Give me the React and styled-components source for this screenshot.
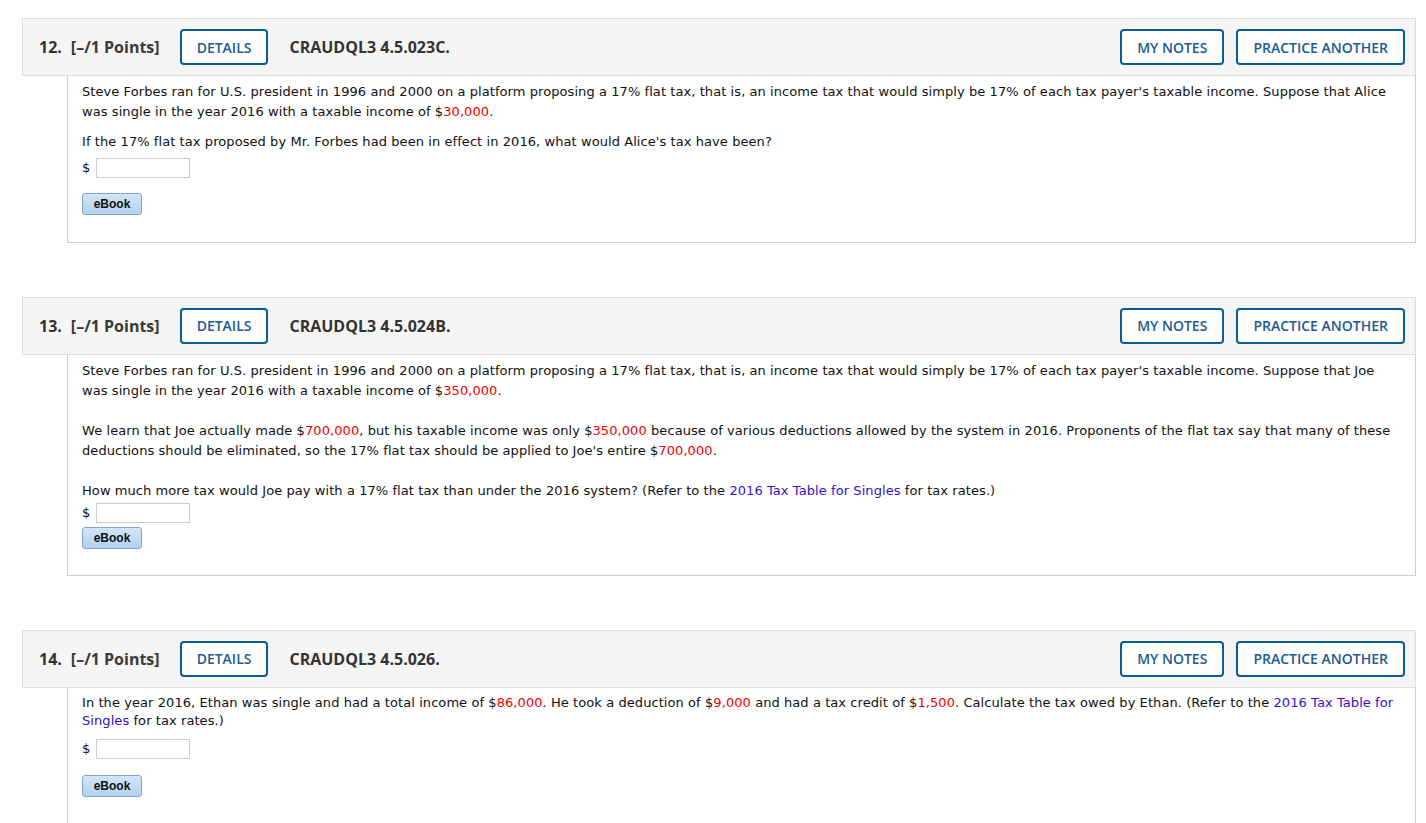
import React from 'react';
import styled, { createGlobalStyle } from 'styled-components';

const GlobalStyle = createGlobalStyle`
    html, body {
        margin: 0;
        padding: 0;
        background: #ffffff;
        overflow: hidden;
    }
`;

const Page = styled.div`
    padding: 18px 10px 0 22px;
`;

const Section = styled.div`
    margin-bottom: ${(p) => p.$gap || 54}px;
`;

const Header = styled.div`
    display: flex;
    align-items: center;
    height: 56px;
    padding: 0 10px 0 16px;
    background: #f5f5f5;
    border: 1px solid #dddddd;
    font-family: "Open Sans", "Liberation Sans", sans-serif;
    color: #333333;
`;

const Number = styled.span`
    font-size: 16px;
    font-weight: 700;
    margin-right: 9px;
`;

const Points = styled.span`
    font-size: 16px;
    font-weight: 700;
    color: #3a3a3a;
    margin-right: 20px;
`;

const Code = styled.span`
    font-size: 16px;
    font-weight: 700;
    color: #333333;
    margin-left: 21px;
`;

const Spacer = styled.div`
    flex: 1;
`;

const OutlineButton = styled.button`
    height: 36px;
    box-sizing: border-box;
    padding: 0 ${(p) => p.$pad || 15}px;
    margin-left: ${(p) => p.$ml || 0}px;
    border: 2px solid #0b5d96;
    border-radius: 4px;
    background: #ffffff;
    color: #1c5b8f;
    font-family: "Open Sans", "Liberation Sans", sans-serif;
    font-size: 14px;
    font-weight: 600;
    text-transform: uppercase;
    cursor: pointer;
`;

const Body = styled.div`
    margin-left: 45px;
    border-left: 1px solid #cccccc;
    border-right: 1px solid #cccccc;
    border-bottom: 1px solid #cccccc;
    padding: ${(p) => p.$top || 5}px 14px ${(p) => p.$bottom || 27}px;
    font-family: "DejaVu Sans", Verdana, sans-serif;
    font-size: 13px;
    letter-spacing: 0.075px;
    line-height: ${(p) => p.$lh || 20}px;
    color: #111111;
`;

const Para = styled.p`
    margin: ${(p) => p.$mt || 0}px 0 0;
`;

const Red = styled.span`
    color: #ee0000;
`;

const Link = styled.a`
    color: #3311cc;
    text-decoration: none;
`;

const AnswerRow = styled.div`
    display: flex;
    align-items: center;
    gap: 6px;
    margin-top: ${(p) => p.$mt || 0}px;
    height: 20px;
    font-size: 13px;
`;

const Dollar = styled.span`
    font-weight: 400;
`;

const AnswerInput = styled.input`
    width: 94px;
    height: 20px;
    box-sizing: border-box;
    border: 1px solid #cccccc;
    padding: 0 3px;
    margin: 0;
`;

const EBook = styled.button`
    display: block;
    margin-top: ${(p) => p.$mt || 16}px;
    width: 60px;
    height: 22px;
    padding: 0;
    border: 1px solid #7fa5d2;
    border-radius: 3px;
    background: linear-gradient(#d3e5f8, #b3d1f1);
    color: #111111;
    font-family: "Liberation Sans", Arial, sans-serif;
    font-size: 12px;
    font-weight: 700;
    letter-spacing: 0;
    cursor: pointer;
`;

const QuestionHeader = ({ num, code }) => (
    <Header>
        <Number>{num}.</Number>
        <Points>[–/1 Points]</Points>
        <OutlineButton $pad={15}>Details</OutlineButton>
        <Code>{code}</Code>
        <Spacer />
        <OutlineButton $pad={15}>My Notes</OutlineButton>
        <OutlineButton $pad={15} $ml={12}>Practice Another</OutlineButton>
    </Header>
);

const App = () => {
    return (
        <Page>
            <GlobalStyle />
            <Section $gap={54}>
                <QuestionHeader num={12} code="CRAUDQL3 4.5.023C." />
                <Body $lh={19.5} $top={6}>
                    <Para>
                        Steve Forbes ran for U.S. president in 1996 and 2000 on a platform proposing a 17% flat tax, that is, an income tax that would simply be 17% of each tax payer's taxable income. Suppose that Alice was single in the year 2016 with a taxable income of $<Red>30,000</Red>.
                    </Para>
                    <Para $mt={11}>If the 17% flat tax proposed by Mr. Forbes had been in effect in 2016, what would Alice's tax have been?</Para>
                    <AnswerRow $mt={6}>
                        <Dollar>$</Dollar>
                        <AnswerInput type="text" />
                    </AnswerRow>
                    <EBook $mt={15}>eBook</EBook>
                </Body>
            </Section>
            <Section $gap={54}>
                <QuestionHeader num={13} code="CRAUDQL3 4.5.024B." />
                <Body $top={6} $bottom={26}>
                    <Para>
                        Steve Forbes ran for U.S. president in 1996 and 2000 on a platform proposing a 17% flat tax, that is, an income tax that would simply be 17% of each tax payer's taxable income. Suppose that Joe was single in the year 2016 with a taxable income of $<Red>350,000</Red>.
                    </Para>
                    <Para $mt={20}>
                        We learn that Joe actually made $<Red>700,000</Red>, but his taxable income was only $<Red>350,000</Red> because of various deductions allowed by the system in 2016. Proponents of the flat tax say that many of these deductions should be eliminated, so the 17% flat tax should be applied to Joe's entire $<Red>700,000</Red>.
                    </Para>
                    <Para $mt={20}>
                        How much more tax would Joe pay with a 17% flat tax than under the 2016 system? (Refer to the <Link href="#">2016 Tax Table for Singles</Link> for tax rates.)
                    </Para>
                    <AnswerRow $mt={2}>
                        <Dollar>$</Dollar>
                        <AnswerInput type="text" />
                    </AnswerRow>
                    <EBook $mt={4}>eBook</EBook>
                </Body>
            </Section>
            <Section>
                <QuestionHeader num={14} code="CRAUDQL3 4.5.026." />
                <Body $lh={18} $top={6} $bottom={40}>
                    <Para>
                        In the year 2016, Ethan was single and had a total income of $<Red>86,000</Red>. He took a deduction of $<Red>9,000</Red> and had a tax credit of $<Red>1,500</Red>. Calculate the tax owed by Ethan. (Refer to the <Link href="#">2016 Tax Table for Singles</Link> for tax rates.)
                    </Para>
                    <AnswerRow $mt={9}>
                        <Dollar>$</Dollar>
                        <AnswerInput type="text" />
                    </AnswerRow>
                    <EBook $mt={16}>eBook</EBook>
                </Body>
            </Section>
        </Page>
    );
};

export default App;
